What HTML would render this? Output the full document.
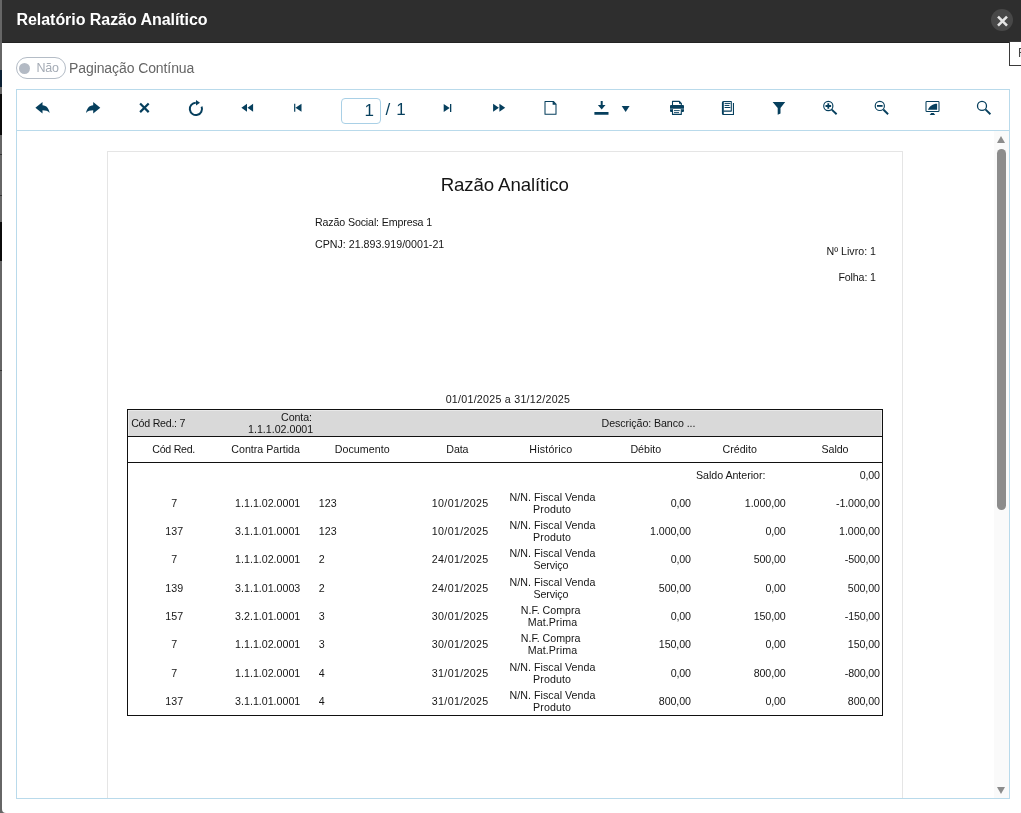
<!DOCTYPE html>
<html lang="pt-BR">
<head>
<meta charset="utf-8">
<title>Relatório Razão Analítico</title>
<style>
html,body{margin:0;padding:0;}
body{width:1021px;height:813px;overflow:hidden;background:#666;position:relative;font-family:"Liberation Sans",Arial,sans-serif;}
.abs{position:absolute;}
.bgseg{position:absolute;left:0;width:3px;}
.dlg{will-change:transform;position:absolute;left:2px;top:0;width:1022px;height:813px;background:#fff;border-radius:0 0 4px 4px;overflow:hidden;}
.hdr{position:absolute;left:0;top:0;width:100%;height:43px;background:#2e2e2e;border-bottom:1px solid #232323;box-sizing:border-box;}
.hdr .ttl{position:absolute;left:14.5px;top:10px;font-size:16px;font-weight:bold;color:#fff;line-height:19px;white-space:nowrap;letter-spacing:-0.05px;}
.close{position:absolute;left:989px;top:9px;width:22px;height:22px;border-radius:50%;background:#484848;}
.tip{position:absolute;left:1007px;top:41px;width:40px;height:23px;border:1px solid #3a3a3a;background:#fff;font-size:12px;color:#444;line-height:23px;padding-left:8px;box-sizing:content-box;}
.tog{position:absolute;left:14px;top:57px;width:48px;height:20px;border:1px solid #b4bcc6;border-radius:11px;background:#fff;}
.tog i{position:absolute;left:2px;top:4.5px;width:11px;height:11px;border-radius:50%;background:#b3bac4;}
.tog span{position:absolute;left:19.5px;top:0;line-height:21px;font-size:12.5px;color:#a4abb5;letter-spacing:-0.3px;}
.lbl{position:absolute;left:67px;top:58px;font-size:14px;line-height:20px;color:#666;white-space:nowrap;letter-spacing:-0.09px;}
.viewer{position:absolute;left:14px;top:89px;width:992px;height:708px;border:1px solid #b9daeb;background:#fff;overflow:hidden;}
.tb{position:absolute;left:0;top:0;width:100%;height:40px;border-bottom:1px solid #b9daeb;background:#fff;}
.ic{position:absolute;top:0;left:0;}
.pin{position:absolute;left:324px;top:8px;width:38px;height:24px;border:1px solid #a9d0e6;border-radius:4px;background:#fff;}
.pin span{position:absolute;right:6px;top:2.1px;font-size:17px;line-height:20px;color:#063f5d;}
.ptot{position:absolute;left:368.5px;top:10px;font-size:17px;line-height:20px;color:#063f5d;white-space:nowrap;letter-spacing:0.6px;}
.area{position:absolute;left:0;top:41px;width:992px;height:667px;overflow:hidden;background:#fff;}
.sb{position:absolute;left:977px;top:0;width:15px;height:667px;background:#fafafa;}
.sb .th{position:absolute;left:3px;top:18px;width:9px;height:361px;border-radius:4.5px;background:#8c8c8c;}
.sb .up{position:absolute;left:3px;top:5px;width:0;height:0;border-left:4.5px solid transparent;border-right:4.5px solid transparent;border-bottom:7px solid #8c8c8c;}
.sb .dn{position:absolute;left:3px;top:656px;width:0;height:0;border-left:4.5px solid transparent;border-right:4.5px solid transparent;border-top:7px solid #8c8c8c;}
.page{position:absolute;left:90px;top:20px;width:794px;height:800px;border:1px solid #e5e5e5;background:#fff;}
/* report coords are relative to body: wrapper offsets */
.rep{position:absolute;left:-108px;top:-152px;width:1021px;height:1000px;font-size:10.67px;color:#161616;}
.rep div{position:absolute;white-space:nowrap;line-height:12px;}
.t18{font-size:18.67px;line-height:22px !important;color:#151515;}
.c{text-align:center;}
.r{text-align:right;}
.line{background:#111;}
</style>
</head>
<body>
<div class="bgseg" style="top:70px;height:17px;background:#0c2034"></div>
<div class="bgseg" style="top:94px;height:41px;background:#0b0b0b"></div>
<div class="bgseg" style="top:222px;height:39px;background:#0b0b0b"></div>
<div class="bgseg" style="top:154px;height:1px;background:#333"></div>
<div class="bgseg" style="top:195px;height:1px;background:#333"></div>
<div class="bgseg" style="top:370px;height:1px;background:#333"></div>
<div class="dlg">
  <div class="hdr">
    <div class="ttl">Relatório Razão Analítico</div>
    <div class="close"><svg width="22" height="22" viewBox="0 0 22 22"><path d="M7 7.6 L16 16.6 M16 7.6 L7 16.6" stroke="#e6e6e6" stroke-width="2.6" fill="none"/></svg></div>
  </div>
  <div class="tog"><i></i><span>Não</span></div>
  <div class="lbl">Paginação Contínua</div>
  <div class="viewer">
    <div class="tb">
      <svg class="ic" width="992" height="40" viewBox="17 90 992 40" fill="#063f5d">
        <!-- icons placed in absolute page coords -->
        <g>
<path d="M35.4 107.7 L42.5 101.9 L42.5 105.2 C46.5 105.4 49 108.5 49.6 112.9 C47.8 110.9 45.6 110.3 42.5 110.3 L42.5 113.6 Z"/>
<path d="M100.3 107.7 L93.2 101.9 L93.2 105.2 C89.2 105.4 86.7 108.5 86.1 112.9 C87.9 110.9 90.1 110.3 93.2 110.3 L93.2 113.6 Z"/>
<path d="M140.1 103.5 L148.7 112.1 M148.7 103.5 L140.1 112.1" stroke="#063f5d" stroke-width="2.2" fill="none"/>
<path d="M201.6 106.7 A6.1 6.1 0 1 1 195.8 102.8" stroke="#063f5d" stroke-width="2" fill="none"/>
<path d="M196 100.1 L200 102.8 L196 105.5 Z"/>
<path d="M241.4 107.8 L247 103.8 V111.8 Z M247.5 107.8 L253.1 103.8 V111.8 Z"/>
<path d="M294.1 103.8 H295.3 V111.8 H294.1 Z M295.5 107.8 L301.5 103.8 V111.8 Z"/>
<path d="M443.7 103.9 L449.7 107.9 L443.7 111.9 Z M450 103.9 H451.3 V111.9 H450 Z"/>
<path d="M493.1 103.8 L498.9 107.8 L493.1 111.8 Z M499.4 103.8 L505.2 107.8 L499.4 111.8 Z"/>
<path d="M545 101.4 H553.4 L556 104 V114.2 H545 Z" stroke="#063f5d" stroke-width="1.05" fill="none" stroke-linejoin="round"/>
<path d="M552.6 101 V104.8 H556.4 Z"/>
<path d="M600.7 100.9 H602.7 V104.9 H605.5 L601.7 109.6 L597.9 104.9 H600.7 Z M594.4 111.9 H608.5 V114.8 H594.4 Z"/>
<path d="M621.7 106 H629.6 L625.65 111.9 Z"/>
<path d="M672.5 105.2 V101.4 H679.4 L681.3 103.3 V105.2" stroke="#063f5d" stroke-width="1.1" fill="none" stroke-linejoin="round"/>
<path d="M679 101 V103.8 H681.8 Z"/>
<path d="M670 106 a1 1 0 0 1 1 -1 H683 a1 1 0 0 1 1 1 V108.85 H670 Z"/>
<path d="M670 109.35 H672.6 V111.9 H671 a1 1 0 0 1 -1 -1 Z M681.4 109.35 H684 V110.9 a1 1 0 0 1 -1 1 H681.4 Z"/>
<path d="M672.5 109.3 V114.4 H681.3 V109.3" stroke="#063f5d" stroke-width="1.1" fill="none" stroke-linejoin="round"/>
<path d="M674 110.6 H679.7 M674 112.6 H679" stroke="#063f5d" stroke-width="0.9" fill="none"/>
<path d="M723.2 101.4 H731.3 V111.1 H723.5" stroke="#063f5d" stroke-width="1.05" fill="none" stroke-linejoin="round"/>
<path d="M721.9 102.4 a1.5 1.5 0 0 1 1.5 -1.5 H723.8 V113.9 H734 V114.9 H723.4 a1.5 1.5 0 0 1 -1.5 -1.5 Z"/>
<path d="M732.9 102.9 H734 V114.4 H732.9 Z"/>
<path d="M725 103.4 H730 M725 105.45 H729 M725 107.5 H730" stroke="#063f5d" stroke-width="1" fill="none" stroke-linecap="round"/>
<path d="M772.6 101.9 H785.2 L780.5 107.9 V113.4 L777.7 114.8 V107.9 Z"/>
<circle cx="828.3" cy="106" r="4.6" stroke="#063f5d" stroke-width="1.15" fill="none"/>
<path d="M825.5 106 H831.1 M828.3 103.2 V108.8" stroke="#063f5d" stroke-width="1.8" fill="none"/>
<path d="M831.8 109.6 L836.6 114.3" stroke="#063f5d" stroke-width="1.9" fill="none"/>
<circle cx="879.8" cy="105.9" r="4.6" stroke="#063f5d" stroke-width="1.15" fill="none"/>
<path d="M877 105.9 H882.6" stroke="#063f5d" stroke-width="1.8" fill="none"/>
<path d="M883.3 109.5 L888.1 114.2" stroke="#063f5d" stroke-width="1.9" fill="none"/>
<rect x="926" y="101.4" width="13" height="10.1" rx="0.8" stroke="#063f5d" stroke-width="1.05" fill="none"/>
<path d="M937.1 103.8 V109.7 H927.9 C929.6 106.4 932.6 103.8 937.1 103.8 Z"/>
<path d="M929.7 114.9 L931.2 113 H933.7 L935.2 114.9 Z"/>
<circle cx="982" cy="105.9" r="4.5" stroke="#063f5d" stroke-width="1.3" fill="none"/>
<path d="M985.4 109.4 L990.4 114.2" stroke="#063f5d" stroke-width="1.9" fill="none"/>
</g>
      </svg>
      <div class="pin"><span>1</span></div>
      <div class="ptot">/ 1</div>
    </div>
    <div class="area">
      <div class="page"><div class="rep">
<div style="left:127px;top:409px;width:756px;height:28px;background:#e8e8e8"></div>
<div style="left:129px;top:411px;width:752px;height:26px;background:#d9d9d9"></div>
<div class="line" style="left:127px;top:409px;width:756px;height:1px"></div>
<div class="line" style="left:127px;top:436px;width:756px;height:1px"></div>
<div class="line" style="left:127px;top:462px;width:756px;height:1px"></div>
<div class="line" style="left:127px;top:715px;width:756px;height:1px"></div>
<div class="line" style="left:127px;top:409px;width:1px;height:307px"></div>
<div class="line" style="left:882px;top:409px;width:1px;height:307px"></div>
<div class="t18" style="left:440.66px;top:173.60px;letter-spacing:-0.106px">Razão Analítico</div>
<div style="left:315.00px;top:216.00px;letter-spacing:-0.140px">Razão Social: Empresa 1</div>
<div style="left:315.00px;top:238.00px;letter-spacing:0.004px">CPNJ: 21.893.919/0001-21</div>
<div style="left:826.56px;top:245.00px;letter-spacing:-0.006px">Nº Livro: 1</div>
<div style="left:838.40px;top:271.00px;letter-spacing:-0.129px">Folha: 1</div>
<div style="left:445.66px;top:393.00px;letter-spacing:0.262px">01/01/2025 a 31/12/2025</div>
<div style="left:131.20px;top:417.00px;letter-spacing:-0.264px">Cód Red.: 7</div>
<div style="left:281.10px;top:411.00px;letter-spacing:-0.100px">Conta:</div>
<div style="left:248.04px;top:423.00px;letter-spacing:-0.002px">1.1.1.02.0001</div>
<div style="left:601.60px;top:417.00px;letter-spacing:-0.082px">Descrição: Banco ...</div>
<div style="left:152.29px;top:443.00px;letter-spacing:-0.285px">Cód Red.</div>
<div style="left:231.34px;top:443.00px;letter-spacing:-0.015px">Contra Partida</div>
<div style="left:334.72px;top:443.00px;letter-spacing:0.058px">Documento</div>
<div style="left:446.30px;top:443.00px;letter-spacing:-0.105px">Data</div>
<div style="left:529.32px;top:443.00px;letter-spacing:0.188px">Histórico</div>
<div style="left:630.40px;top:443.00px;letter-spacing:-0.001px">Débito</div>
<div style="left:722.51px;top:443.00px;letter-spacing:0.005px">Crédito</div>
<div style="left:821.54px;top:443.00px;letter-spacing:-0.086px">Saldo</div>
<div style="left:696.00px;top:469.00px;letter-spacing:-0.037px">Saldo Anterior:</div>
<div style="left:859.76px;top:469.00px;letter-spacing:-0.168px">0,00</div>
<div style="left:171.24px;top:497.00px;letter-spacing:0.065px">7</div>
<div style="left:235.12px;top:497.00px;letter-spacing:-0.002px">1.1.1.02.0001</div>
<div style="left:318.70px;top:497.00px;letter-spacing:0.065px">123</div>
<div style="left:431.81px;top:497.00px;letter-spacing:0.339px">10/01/2025</div>
<div style="left:509.61px;top:491.00px;letter-spacing:0.031px">N/N. Fiscal Venda</div>
<div style="left:533.09px;top:503.00px;letter-spacing:0.082px">Produto</div>
<div style="left:670.76px;top:497.00px;letter-spacing:-0.168px">0,00</div>
<div style="left:744.87px;top:497.00px;letter-spacing:-0.079px">1.000,00</div>
<div style="left:836.07px;top:497.00px;letter-spacing:-0.137px">-1.000,00</div>
<div style="left:165.25px;top:525.00px;letter-spacing:0.065px">137</div>
<div style="left:235.12px;top:525.00px;letter-spacing:-0.002px">3.1.1.01.0001</div>
<div style="left:318.70px;top:525.00px;letter-spacing:0.065px">123</div>
<div style="left:431.81px;top:525.00px;letter-spacing:0.339px">10/01/2025</div>
<div style="left:509.61px;top:519.00px;letter-spacing:0.031px">N/N. Fiscal Venda</div>
<div style="left:533.09px;top:531.00px;letter-spacing:0.082px">Produto</div>
<div style="left:650.07px;top:525.00px;letter-spacing:-0.079px">1.000,00</div>
<div style="left:765.56px;top:525.00px;letter-spacing:-0.168px">0,00</div>
<div style="left:839.07px;top:525.00px;letter-spacing:-0.079px">1.000,00</div>
<div style="left:171.24px;top:553.00px;letter-spacing:0.065px">7</div>
<div style="left:235.12px;top:553.00px;letter-spacing:-0.002px">1.1.1.02.0001</div>
<div style="left:318.70px;top:553.00px;letter-spacing:0.065px">2</div>
<div style="left:431.81px;top:553.00px;letter-spacing:0.339px">24/01/2025</div>
<div style="left:509.61px;top:547.00px;letter-spacing:0.031px">N/N. Fiscal Venda</div>
<div style="left:533.45px;top:559.00px;letter-spacing:-0.073px">Serviço</div>
<div style="left:670.76px;top:553.00px;letter-spacing:-0.168px">0,00</div>
<div style="left:753.66px;top:553.00px;letter-spacing:-0.090px">500,00</div>
<div style="left:844.84px;top:553.00px;letter-spacing:-0.164px">-500,00</div>
<div style="left:165.25px;top:582.00px;letter-spacing:0.065px">139</div>
<div style="left:235.12px;top:582.00px;letter-spacing:-0.002px">3.1.1.01.0003</div>
<div style="left:318.70px;top:582.00px;letter-spacing:0.065px">2</div>
<div style="left:431.81px;top:582.00px;letter-spacing:0.339px">24/01/2025</div>
<div style="left:509.61px;top:576.00px;letter-spacing:0.031px">N/N. Fiscal Venda</div>
<div style="left:533.45px;top:588.00px;letter-spacing:-0.073px">Serviço</div>
<div style="left:658.86px;top:582.00px;letter-spacing:-0.090px">500,00</div>
<div style="left:765.56px;top:582.00px;letter-spacing:-0.168px">0,00</div>
<div style="left:847.86px;top:582.00px;letter-spacing:-0.090px">500,00</div>
<div style="left:165.25px;top:610.00px;letter-spacing:0.065px">157</div>
<div style="left:235.12px;top:610.00px;letter-spacing:-0.002px">3.2.1.01.0001</div>
<div style="left:318.70px;top:610.00px;letter-spacing:0.065px">3</div>
<div style="left:431.81px;top:610.00px;letter-spacing:0.339px">30/01/2025</div>
<div style="left:520.82px;top:604.00px;letter-spacing:-0.024px">N.F. Compra</div>
<div style="left:527.70px;top:616.00px;letter-spacing:0.105px">Mat.Prima</div>
<div style="left:670.76px;top:610.00px;letter-spacing:-0.168px">0,00</div>
<div style="left:753.66px;top:610.00px;letter-spacing:-0.090px">150,00</div>
<div style="left:844.84px;top:610.00px;letter-spacing:-0.164px">-150,00</div>
<div style="left:171.24px;top:638.00px;letter-spacing:0.065px">7</div>
<div style="left:235.12px;top:638.00px;letter-spacing:-0.002px">1.1.1.02.0001</div>
<div style="left:318.70px;top:638.00px;letter-spacing:0.065px">3</div>
<div style="left:431.81px;top:638.00px;letter-spacing:0.339px">30/01/2025</div>
<div style="left:520.82px;top:632.00px;letter-spacing:-0.024px">N.F. Compra</div>
<div style="left:527.70px;top:644.00px;letter-spacing:0.105px">Mat.Prima</div>
<div style="left:658.86px;top:638.00px;letter-spacing:-0.090px">150,00</div>
<div style="left:765.56px;top:638.00px;letter-spacing:-0.168px">0,00</div>
<div style="left:847.86px;top:638.00px;letter-spacing:-0.090px">150,00</div>
<div style="left:171.24px;top:667.00px;letter-spacing:0.065px">7</div>
<div style="left:235.12px;top:667.00px;letter-spacing:-0.002px">1.1.1.02.0001</div>
<div style="left:318.70px;top:667.00px;letter-spacing:0.065px">4</div>
<div style="left:431.81px;top:667.00px;letter-spacing:0.339px">31/01/2025</div>
<div style="left:509.61px;top:661.00px;letter-spacing:0.031px">N/N. Fiscal Venda</div>
<div style="left:533.09px;top:673.00px;letter-spacing:0.082px">Produto</div>
<div style="left:670.76px;top:667.00px;letter-spacing:-0.168px">0,00</div>
<div style="left:753.66px;top:667.00px;letter-spacing:-0.090px">800,00</div>
<div style="left:844.84px;top:667.00px;letter-spacing:-0.164px">-800,00</div>
<div style="left:165.25px;top:695.00px;letter-spacing:0.065px">137</div>
<div style="left:235.12px;top:695.00px;letter-spacing:-0.002px">3.1.1.01.0001</div>
<div style="left:318.70px;top:695.00px;letter-spacing:0.065px">4</div>
<div style="left:431.81px;top:695.00px;letter-spacing:0.339px">31/01/2025</div>
<div style="left:509.61px;top:689.00px;letter-spacing:0.031px">N/N. Fiscal Venda</div>
<div style="left:533.09px;top:701.00px;letter-spacing:0.082px">Produto</div>
<div style="left:658.86px;top:695.00px;letter-spacing:-0.090px">800,00</div>
<div style="left:765.56px;top:695.00px;letter-spacing:-0.168px">0,00</div>
<div style="left:847.86px;top:695.00px;letter-spacing:-0.090px">800,00</div>
</div></div>
      <div class="sb"><div class="up"></div><div class="th"></div><div class="dn"></div></div>
    </div>
  </div>
  <div class="tip">Fechar</div>
</div>
</body>
</html>
